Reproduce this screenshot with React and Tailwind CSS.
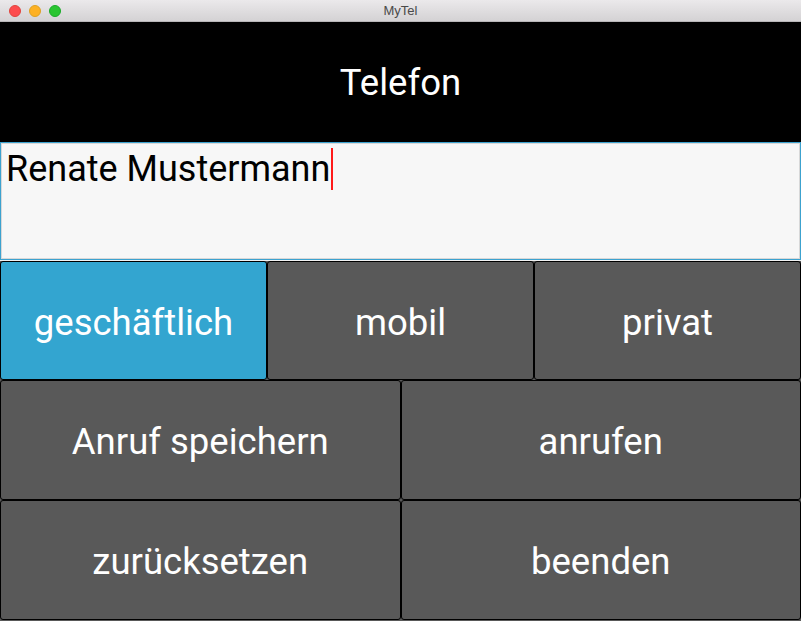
import React from 'react';

const Btn = ({ label, active }) => (
  <button
    className={`flex items-center justify-center pt-[5px] border border-black rounded-[3px] text-white text-[36.5px] ${
      active ? 'bg-[#33a5d0]' : 'bg-[#595959]'
    }`}
  >
    {label}
  </button>
);

const App = () => {
  return (
    <div className="w-[801px] h-[621px] flex flex-col bg-[#595959] overflow-hidden" style={{ fontFamily: 'Roboto, sans-serif' }}>
      {/* title bar */}
      <div className="h-[22px] flex items-center relative bg-gradient-to-b from-[#ebe9eb] to-[#d4d2d4] border-b border-[#b8b6b8]">
        <div className="flex gap-[8px] pl-[9px]">
          <span className="w-[12px] h-[12px] rounded-full bg-[#fd4c4e] border border-[#e0443e]" />
          <span className="w-[12px] h-[12px] rounded-full bg-[#fdb124] border border-[#dea123]" />
          <span className="w-[12px] h-[12px] rounded-full bg-[#2ac531] border border-[#1aab29]" />
        </div>
        <div className="absolute inset-0 flex items-center justify-center text-[13px] text-[#4a4a4a]" style={{ fontFamily: '"Liberation Sans", sans-serif' }}>
          MyTel
        </div>
      </div>

      {/* header */}
      <div className="h-[120px] bg-black flex items-center justify-center pt-[3px] text-white text-[36.5px]">
        Telefon
      </div>

      {/* input */}
      <div className="h-[118px] bg-[#f7f7f7] border border-[#3ca2cf] shadow-[inset_0_0_0_1px_#d8d8d8] pl-[5px] pt-[3px]">
        <div className="flex items-center text-black text-[36px] leading-[46px]">
          <span>Renate Mustermann</span>
          <div className="shrink-0 w-[2px] h-[42px] bg-[#ff1a1a] ml-[1px]"></div>
        </div>
      </div>
      <div className="h-px bg-[#f2f2f2]" />

      {/* buttons */}
      <div className="grid grid-cols-3 h-[119px]">
        <Btn label="geschäftlich" active />
        <Btn label="mobil" />
        <Btn label="privat" />
      </div>
      <div className="grid grid-cols-2 h-[120px]">
        <Btn label="Anruf speichern" />
        <Btn label="anrufen" />
      </div>
      <div className="grid grid-cols-2 h-[120px]">
        <Btn label="zurücksetzen" />
        <Btn label="beenden" />
      </div>
    </div>
  );
};

export default App;
